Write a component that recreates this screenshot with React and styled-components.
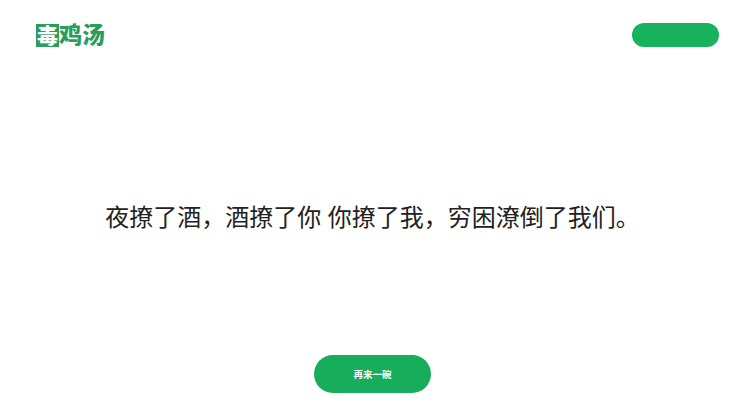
import React from "react";
import styled, { createGlobalStyle } from "styled-components";

const GlobalStyle = createGlobalStyle`
  html, body {
    margin: 0;
    padding: 0;
    background: #fff;
  }
`;

const QUOTE = "夜撩了酒\uFF0C酒撩了你 你撩了我\uFF0C穷困潦倒了我们。";

function App() {
  return (
    <Page>
      <GlobalStyle />
      <Header>
        <Logo>
          <LogoBox>毒</LogoBox>
          <LogoText>鸡汤</LogoText>
        </Logo>
        <HeaderPill />
      </Header>
      <Main>
        <Quote>{QUOTE}</Quote>
      </Main>
      <Footer>
        <AgainButton>再来一碗</AgainButton>
      </Footer>
    </Page>
  );
}

const Page = styled.div`
  display: flex;
  flex-direction: column;
  box-sizing: border-box;
  width: 745px;
  height: 420px;
  font-family: "Liberation Sans", "Noto Sans CJK SC", sans-serif;
`;

const Header = styled.header`
  display: flex;
  justify-content: space-between;
  align-items: center;
  height: 24px;
  padding: 23px 26px 0 36px;
`;

const Logo = styled.div`
  display: flex;
  align-items: center;
  height: 24px;
`;

const LogoBox = styled.span`
  display: block;
  width: 23px;
  height: 23px;
  background: #2a9d5c;
  color: #fff;
  font-size: 21px;
  font-weight: 900;
  line-height: 23px;
  text-align: center;
`;

const LogoText = styled.span`
  color: #2a9d5c;
  font-size: 23px;
  font-weight: 900;
  line-height: 24px;
`;

const HeaderPill = styled.div`
  width: 87px;
  height: 24px;
  border-radius: 12px;
  background: #18b25c;
`;

const Main = styled.main`
  flex: 1;
  display: flex;
  justify-content: center;
  align-items: center;
  padding-top: 34px;
`;

const Quote = styled.p`
  margin: 0;
  color: #222;
  font-size: 24px;
  line-height: 32px;
  white-space: nowrap;
`;

const Footer = styled.footer`
  display: flex;
  justify-content: center;
  padding-bottom: 27px;
`;

const AgainButton = styled.button`
  width: 117px;
  height: 38px;
  padding: 0;
  border: none;
  border-radius: 19px;
  background: #18ad5a;
  color: #fff;
  font-family: inherit;
  font-size: 9.5px;
  font-weight: 700;
`;

export default App;
